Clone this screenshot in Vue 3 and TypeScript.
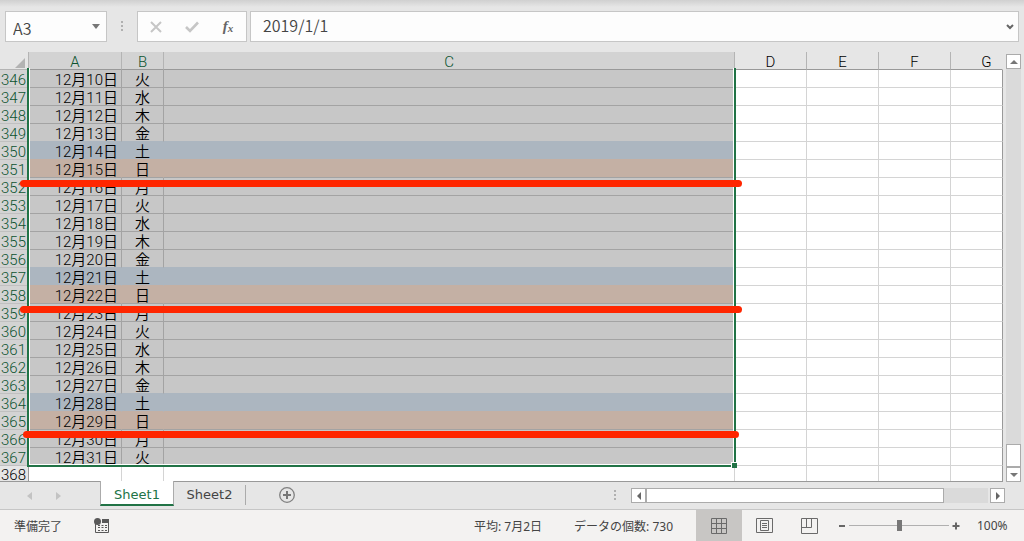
<script setup lang="ts">
import { ref } from 'vue'

type Kind = 'plain' | 'friday' | 'saturday' | 'sunday'
interface DayRow {
  num: number
  date: string
  day: string
  kind: Kind
}

const weekdays = ['日', '月', '火', '水', '木', '金', '土']
const kinds: Record<string, Kind> = { 金: 'friday', 土: 'saturday', 日: 'sunday' }

const rows: DayRow[] = Array.from({ length: 22 }, (_, i) => {
  const date = 10 + i
  const day = weekdays[(i + 2) % 7]
  return { num: 346 + i, date: `12月${date}日`, day, kind: kinds[day] ?? 'plain' }
})

const cellName = ref('A3')
const formula = ref('2019/1/1')
const zoom = ref(100)
</script>

<template>
  <div class="app">
    <header class="formula-bar">
      <div class="name-box">
        <input v-model="cellName" aria-label="名前ボックス" />
        <button class="drop" aria-label="名前の一覧">
          <svg width="8" height="5" viewBox="0 0 8 5"><path d="M0 0h8L4 5z" fill="#777" /></svg>
        </button>
      </div>
      <span class="dots"><i></i><i></i><i></i></span>
      <div class="actions">
        <button aria-label="キャンセル">
          <svg width="12" height="12" viewBox="0 0 12 12"><path d="M1 1l10 10M11 1L1 11" stroke="#c6c6c6" stroke-width="2" fill="none" /></svg>
        </button>
        <button aria-label="入力">
          <svg width="14" height="12" viewBox="0 0 14 12"><path d="M1 6l4 4 8-8.500" stroke="#c6c6c6" stroke-width="2.600" fill="none" /></svg>
        </button>
        <button class="fx" aria-label="関数の挿入"><em>f</em><small>x</small></button>
      </div>
      <div class="formula">
        <input v-model="formula" aria-label="数式バー" />
        <button class="expand" aria-label="数式バーの展開">
          <svg width="8" height="6" viewBox="0 0 8 6"><path d="M1 1l3 3 3-3" stroke="#666" stroke-width="2" fill="none" /></svg>
        </button>
      </div>
    </header>

    <main class="work">
      <div class="sheet">
        <table>
          <colgroup>
            <col class="w-num" /><col class="w-a" /><col class="w-b" /><col />
            <col class="w-d" /><col class="w-d" /><col class="w-d" /><col class="w-g" />
          </colgroup>
          <thead>
            <tr>
              <th class="corner"><svg width="10" height="10" viewBox="0 0 10 10"><path d="M10 0v10H0z" fill="#b3b3b3" /></svg></th>
              <th class="on">A</th>
              <th class="on">B</th>
              <th class="on">C</th>
              <th>D</th>
              <th>E</th>
              <th>F</th>
              <th class="last">G</th>
            </tr>
          </thead>
          <tbody>
            <tr v-for="row in rows" :key="row.num" :class="row.kind">
              <th scope="row" class="on">{{ row.num }}</th>
              <td class="sel date">{{ row.date }}</td>
              <td class="sel day">{{ row.day }}</td>
              <td class="sel"></td>
              <td></td>
              <td></td>
              <td></td>
              <td></td>
            </tr>
            <tr class="bottom">
              <th scope="row">368</th>
              <td></td>
              <td></td>
              <td></td>
              <td></td>
              <td></td>
              <td></td>
              <td></td>
            </tr>
          </tbody>
        </table>
        <div class="selection"><span class="handle"></span></div>
        <div class="mark first"></div>
        <div class="mark second"></div>
        <div class="mark third"></div>
      </div>
      <div class="vscroll">
        <button class="sb" aria-label="上へ"><svg width="8" height="4" viewBox="0 0 8 4"><path d="M0 4h8L4 0z" fill="#777" /></svg></button>
        <div class="vtrack"><div class="vthumb"></div></div>
        <button class="sb" aria-label="下へ"><svg width="8" height="4" viewBox="0 0 8 4"><path d="M0 0h8L4 4z" fill="#777" /></svg></button>
      </div>
    </main>

    <nav class="tabs">
      <div class="tab-nav">
        <button aria-label="前のシート"><svg width="5" height="8" viewBox="0 0 5 8"><path d="M5 0v8L0 4z" fill="#c3c3c3" /></svg></button>
        <button aria-label="次のシート"><svg width="5" height="8" viewBox="0 0 5 8"><path d="M0 0v8l5-4z" fill="#c3c3c3" /></svg></button>
      </div>
      <button class="tab active">Sheet1</button>
      <button class="tab">Sheet2</button>
      <span class="divider"></span>
      <button class="add" aria-label="新しいシート">
        <svg width="16" height="16" viewBox="0 0 16 16"><circle cx="8" cy="8" r="7.300" fill="none" stroke="#808080" stroke-width="1.300" /><path d="M8 4v8M4 8h8" stroke="#777" stroke-width="2" /></svg>
      </button>
      <span class="dots push"><i></i><i></i><i></i></span>
      <div class="hscroll">
        <button class="sb" aria-label="左へ"><svg width="4" height="8" viewBox="0 0 4 8"><path d="M4 0v8L0 4z" fill="#666" /></svg></button>
        <div class="htrack"><div class="hthumb"></div></div>
        <button class="sb" aria-label="右へ"><svg width="4" height="8" viewBox="0 0 4 8"><path d="M0 0v8l4-4z" fill="#666" /></svg></button>
      </div>
    </nav>

    <footer class="status">
      <span class="ready">準備完了</span>
      <button class="macro" aria-label="マクロの記録">
        <svg width="16" height="16" viewBox="0 0 16 16">
          <path d="M1.500 6v8.500h13V2" fill="none" stroke="#595959" />
          <path d="M8 1h7v4H8z" fill="#595959" />
          <circle cx="3.500" cy="3.500" r="3.500" fill="#595959" />
          <path d="M4 7.500h9M4 9.500h9M4 12.500h9" stroke="#595959" stroke-dasharray="2 1.500" />
        </svg>
      </button>
      <span class="avg">平均: 7月2日</span>
      <span class="count">データの個数: 730</span>
      <button class="view current" aria-label="標準">
        <svg width="16" height="16" viewBox="0 0 16 16"><path d="M.5.5h15v15H.5zM5.500.5v15M10.500.5v15M.5 5.500h15M.5 10.500h15" fill="none" stroke="#6a6a6a" /></svg>
      </button>
      <button class="view" aria-label="ページレイアウト">
        <svg width="17" height="15" viewBox="0 0 17 15"><path d="M.5.5h16v14H.5zM4.500 2.500h8v10h-8zM6 5.500h5M6 7.500h5M6 9.500h5" fill="none" stroke="#6a6a6a" /></svg>
      </button>
      <button class="view" aria-label="改ページプレビュー">
        <svg width="17" height="16" viewBox="0 0 17 16"><path d="M.5.5h16v15H.5zM.5 9.500h10v-9M5.500.5v9" fill="none" stroke="#6a6a6a" /></svg>
      </button>
      <button class="step minus" aria-label="縮小"><svg width="6" height="8" viewBox="0 0 6 8"><path d="M0 4h6" stroke="#666" stroke-width="2" /></svg></button>
      <input v-model="zoom" class="slider" type="range" min="0" max="200" aria-label="ズーム" />
      <button class="step" aria-label="拡大"><svg width="8" height="8" viewBox="0 0 8 8"><path d="M.5 4h7M4 .5v7" stroke="#666" stroke-width="2" /></svg></button>
      <span class="percent">{{ zoom }}%</span>
    </footer>
  </div>
</template>

<style>
body {
  margin: 0;
}
</style>

<style scoped>
.app {
  height: 100vh;
  display: flex;
  flex-direction: column;
  overflow: hidden;
  background: #e6e6e6;
  font-family: "Noto Sans", "Noto Sans CJK JP", sans-serif;
  color: #444;
}
.app * {
  box-sizing: border-box;
}
button {
  display: flex;
  align-items: center;
  justify-content: center;
  padding: 0;
  border: 0;
  background: none;
  color: inherit;
  font: inherit;
}
input {
  min-width: 0;
  border: 0;
  padding: 0;
  background: none;
  color: #444;
  outline: none;
  font: 350 16px "Noto Sans CJK JP", sans-serif;
}
svg {
  display: block;
}

.formula-bar {
  flex: none;
  display: flex;
  align-items: flex-start;
  height: 52px;
  padding: 11px 5px 0;
  background: linear-gradient(#d0d0d0, #e6e6e6 7px);
}
.name-box,
.actions,
.formula {
  display: flex;
  align-items: center;
  height: 31px;
  border: 1px solid #c6c6c6;
  background: #fdfdfd;
}
.name-box {
  width: 102px;
  padding: 0 5px 0 7px;
}
.name-box input {
  flex: 1;
  padding-top: 2px;
}
.drop {
  width: 10px;
  height: 20px;
}
.dots {
  display: flex;
  flex-direction: column;
  gap: 2px;
  width: 30px;
  align-items: center;
  padding-top: 10px;
}
.dots i {
  width: 2px;
  height: 2px;
  background: #b0b0b0;
}
.actions {
  width: 110px;
}
.actions button {
  flex: 1;
  height: 28px;
}
.fx {
  color: #666;
  font-family: "Liberation Serif", serif;
  font-weight: 700;
}
.fx em {
  font-size: 15px;
}
.fx small {
  font-size: 11px;
  font-style: italic;
  padding-top: 3px;
}
.formula {
  flex: 1;
  margin-left: 3px;
  padding: 0 4px 0 12px;
}
.formula input {
  flex: 1;
  padding-bottom: 3px;
}

.work {
  flex: none;
  display: flex;
}
.sheet {
  position: relative;
  flex: 1;
  min-width: 0;
  height: 430px;
  overflow: hidden;
  border-bottom: 1px solid #999;
}
table {
  width: 100%;
  table-layout: fixed;
  border-collapse: separate;
  border-spacing: 0;
  color: #000;
  font-family: Roboto, "Noto Sans CJK JP", sans-serif;
  font-size: 15px;
}
.w-num {
  width: 29px;
}
.w-a {
  width: 93px;
}
.w-b {
  width: 42px;
}
.w-d {
  width: 72px;
}
.w-g {
  width: 52px;
}
th,
td {
  height: 18px;
  padding: 4px 0 0;
  border-right: 1px solid #d4d4d4;
  border-bottom: 1px solid #d4d4d4;
  overflow: hidden;
  white-space: nowrap;
  font-weight: 350;
  line-height: 13px;
}
td {
  background: #fff;
}
td:last-child {
  border-right-color: #999;
}
thead th {
  border-right-color: #b4b4b4;
  border-bottom-color: #999;
}
thead th.on {
  background: #d3d3d3;
  color: #0b5330;
}
thead .last {
  padding-left: 20px;
  border-right-color: #e6e6e6;
}
thead .corner {
  padding-left: 15px;
  border-bottom-color: #b4b4b4;
}
tbody th {
  padding-left: 1px;
  text-align: left;
  border-right-color: #999;
  border-bottom-color: #c0c0c0;
}
tbody th.on {
  background: #d3d3d3;
  color: #0b5330;
}
.bottom th {
  padding-top: 3px;
  vertical-align: top;
}
td.sel {
  background: #c7c7c7;
  border-color: #a3a3a3;
}
.date {
  padding-right: 3px;
  text-align: right;
}
.day {
  text-align: center;
}
.friday td.sel {
  border-bottom-color: #acb6c0;
}
.saturday td.sel {
  background: #acb6c0;
  border-color: #acb6c0;
  border-bottom-color: #c4b0a4;
}
.sunday td.sel {
  background: #c4b0a4;
  border-right-color: #c4b0a4;
}

.selection {
  position: absolute;
  top: 16px;
  left: 27px;
  right: 267px;
  height: 399px;
  border: 2px solid #217346;
  border-top: 0;
  box-shadow: inset 1px -1px #fff, inset -1px 0 #fff;
}
.handle {
  position: absolute;
  right: -3px;
  bottom: -3px;
  width: 6px;
  height: 6px;
  border: solid #fff;
  border-width: 1px 0 0 1px;
  background: #217346;
}
.mark {
  position: absolute;
  left: 20px;
  right: 261px;
  height: 7px;
  border-radius: 4px;
  background: #ff2600;
}
.first {
  top: 128px;
}
.second {
  top: 254px;
}
.third {
  top: 379px;
  left: 23px;
  right: 264px;
}

.vscroll {
  display: flex;
  flex-direction: column;
  width: 21px;
  padding: 2px 3px 0 3px;
}
.sb {
  flex: none;
  width: 15px;
  height: 15px;
  border: 1px solid #ababab;
  background: #fff;
}
.vtrack {
  flex: 1;
  display: flex;
  align-items: flex-end;
  background: #dadada;
}
.vthumb {
  width: 15px;
  height: 23px;
  border: 1px solid #ababab;
  background: #fff;
}

.tabs {
  flex: none;
  display: flex;
  height: 27px;
  font-family: "DejaVu Sans", sans-serif;
  font-size: 13px;
}
.tab-nav {
  display: flex;
  justify-content: space-between;
  width: 100px;
  padding: 0 39px 0 27px;
}
.tab {
  height: 24px;
  width: 71px;
  padding-top: 1px;
}
.tab.active {
  height: 25px;
  width: 74px;
  margin-top: -1px;
  padding-top: 3px;
  position: relative;
  border: solid #ababab;
  border-width: 0 1px 2px;
  border-bottom-color: #217346;
  background: #fff;
  color: #217346;
}
.divider {
  width: 1px;
  height: 20px;
  margin-top: 3px;
  background: #ababab;
}
.add {
  width: 16px;
  height: 26px;
  margin-left: 33px;
}
.push {
  margin-left: auto;
  width: 32px;
  padding-top: 8px;
}
.hscroll {
  display: flex;
  width: 374px;
  height: 15px;
  margin: 6px 19px 0 0;
}
.htrack {
  flex: 1;
  margin-right: 2px;
  background: #dadada;
}
.hthumb {
  width: 87%;
  height: 15px;
  border: 1px solid #ababab;
  background: #fff;
}

.status {
  flex: 1;
  display: flex;
  align-items: center;
  border-top: 1px solid #c6c6c6;
  background: #f3f2f1;
  font-family: "Noto Sans", "Noto Sans CJK JP", sans-serif;
  font-size: 12px;
}
.ready {
  margin-left: 14px;
}
.macro {
  margin-left: 32px;
}
.avg {
  margin-left: auto;
}
.count {
  margin: 0 23px 0 32px;
}
.view {
  width: 45px;
  height: 100%;
}
.view.current {
  width: 46px;
  background: #c8c6c4;
}
.step {
  width: 14px;
  height: 20px;
}
.step.minus {
  margin-left: 3px;
}
.slider {
  appearance: none;
  width: 100px;
  height: 12px;
  margin: 0;
  background: linear-gradient(#b0b0b0, #b0b0b0) center / 100% 1px no-repeat;
}
.slider::-webkit-slider-thumb {
  appearance: none;
  width: 5px;
  height: 11px;
  background: #777;
}
.percent {
  width: 61px;
  padding-left: 14px;
}
</style>
